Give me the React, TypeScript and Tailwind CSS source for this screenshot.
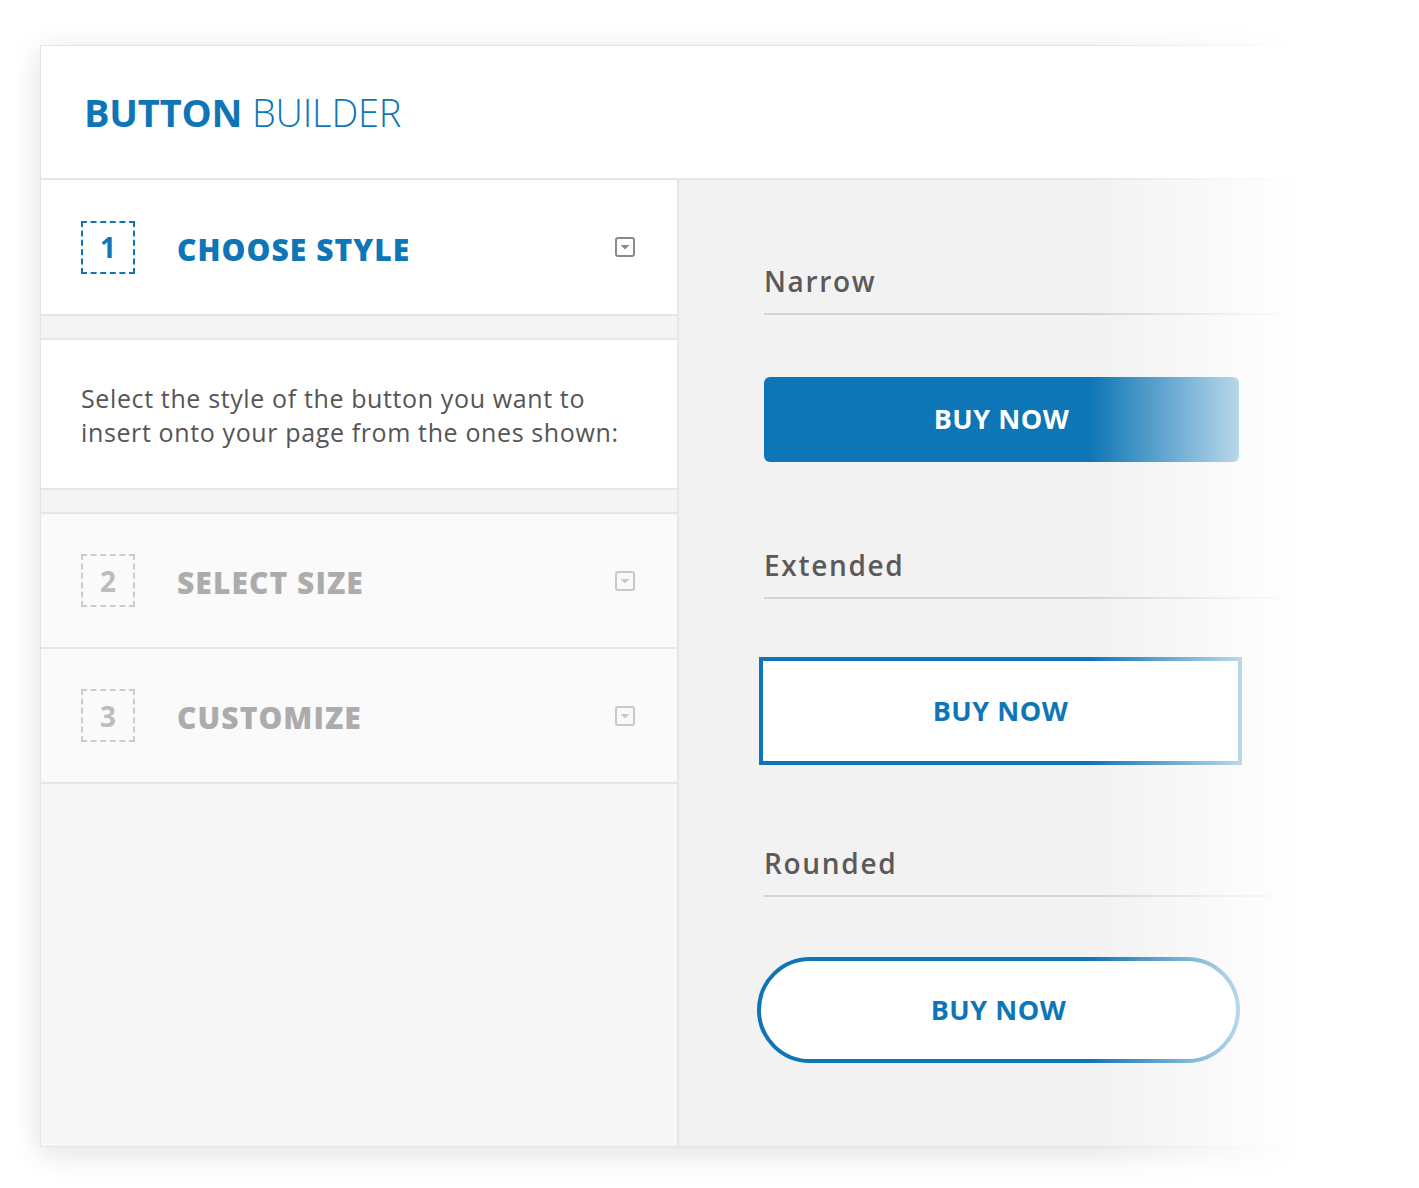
import React from "react";

const BLUE = "text-[#0e76b6]";

function Caret({ muted }: { muted?: boolean }) {
  const c = muted ? "#c8c8c8" : "#8a8a8a";
  return (
    <svg width="20" height="20" viewBox="0 0 20 20" className="shrink-0">
      <rect x="1" y="1" width="18" height="18" rx="2" fill="none" stroke={c} strokeWidth="2" />
      <polygon points="5.5,8 14.5,8 10,12.5" fill={c} />
    </svg>
  );
}

function Step({ n, title, active }: { n: number; title: string; active?: boolean }) {
  return (
    <div className="flex items-center h-full pl-[40px] pr-[42px]">
      <div
        className={`w-[54px] h-[53px] border-2 border-dashed flex items-center justify-center text-[28px] font-bold leading-none ${
          active ? "border-[#0e76b6] text-[#0e76b6]" : "border-[#cccccc] text-[#bcbcbc]"
        }`}
      >
        {n}
      </div>
      <div
        className={`ml-[42px] mt-[4px] text-[30px] font-extrabold tracking-[0.035em] ${
          active ? "text-[#0e76b6]" : "text-[#acacac]"
        }`}
      >
        {title}
      </div>
      <div className="ml-auto">
        <Caret muted={!active} />
      </div>
    </div>
  );
}

function Label({ text, mt }: { text: string; mt: string }) {
  return (
    <div className={`${mt} border-b-2 border-[#d4d4d4] pb-[12px]`}>
      <div className="h-[40px] leading-[40px] text-[28px] font-semibold tracking-[0.06em] text-[#5a5a5a]">{text}</div>
    </div>
  );
}

export default function App() {
  return (
    <div
      className="relative h-[1188px] w-full bg-white overflow-hidden"
      style={{ fontFamily: '"Open Sans", "Noto Sans", sans-serif' }}
    >
      <div className="absolute left-[40px] top-[45px] w-[1379px] h-[1102px] bg-white border border-[#e4e4e0] shadow-[0_6px_28px_rgba(0,0,0,0.13)] flex flex-col">
        {/* header */}
        <div className="h-[134px] shrink-0 flex items-center pl-[43px] border-b-2 border-[#e6e6e3]">
          <h1 className={`text-[38px] leading-none tracking-[-0.005em] ${BLUE}`}>
            <span className="font-bold">BUTTON</span> <span className="font-light">BUILDER</span>
          </h1>
        </div>

        <div className="flex flex-1 min-h-0">
          {/* left column */}
          <div className="w-[638px] shrink-0 border-r-2 border-[#e6e6e3] bg-[#f7f7f7] flex flex-col">
            <div className="h-[136px] bg-white border-b-2 border-[#e6e6e3]">
              <Step n={1} title="CHOOSE STYLE" active />
            </div>
            <div className="h-[22px] bg-[#f4f4f4]" />
            <div className="h-[152px] bg-white border-y-2 border-[#e6e6e3] flex items-center pl-[40px] pt-[2px]">
              <p className="text-[25px] leading-[34px] tracking-[0.025em] text-[#555555]">
                Select the style of the button you want to
                <br />
                insert onto your page from the ones shown:
              </p>
            </div>
            <div className="h-[22px] bg-[#f4f4f4]" />
            <div className="h-[137px] bg-[#fafafa] border-y-2 border-[#e6e6e3]">
              <Step n={2} title="SELECT SIZE" />
            </div>
            <div className="h-[135px] bg-[#fafafa] border-b-2 border-[#e6e6e3]">
              <Step n={3} title="CUSTOMIZE" />
            </div>
          </div>

          {/* right column */}
          <div className="flex-1 bg-[#f2f2f2] pl-[85px]">
            <Label text="Narrow" mt="mt-[81px]" />
            <button className="mt-[62px] w-[475px] h-[85px] rounded-[6px] bg-[#0e76b6] text-white text-[27px] font-bold tracking-[0.02em]">
              BUY NOW
            </button>

            <Label text="Extended" mt="mt-[83px]" />
            <button
              className={`-ml-[5px] mt-[58px] w-[483px] h-[108px] border-4 border-[#0e76b6] bg-white ${BLUE} text-[27px] font-bold tracking-[0.02em] block`}
            >
              BUY NOW
            </button>

            <Label text="Rounded" mt="mt-[78px]" />
            <button
              className={`-ml-[7px] mt-[60px] w-[483px] h-[106px] rounded-full border-4 border-[#0e76b6] bg-white ${BLUE} text-[27px] font-bold tracking-[0.02em] block`}
            >
              BUY NOW
            </button>
          </div>
        </div>
      </div>

      {/* fade to white on the right edge */}
      <div className="pointer-events-none absolute inset-y-0 left-[1090px] right-0 bg-[linear-gradient(to_right,rgba(255,255,255,0)_0px,#ffffff_211px)]" />
    </div>
  );
}
